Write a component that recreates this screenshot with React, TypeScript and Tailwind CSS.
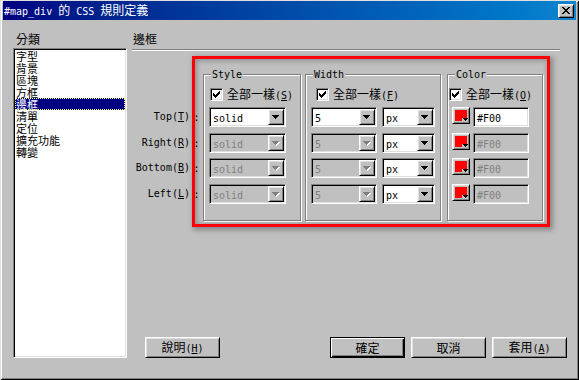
import type { ReactNode } from "react";

const sunken =
  "border border-t-[#808080] border-l-[#808080] border-b-white border-r-white shadow-[inset_1px_1px_0_#000,inset_-1px_-1px_0_#dfdfdf]";
const raised =
  "border border-t-white border-l-white border-b-black border-r-black shadow-[inset_1px_1px_0_#dfdfdf,inset_-1px_-1px_0_#808080]";

const categories = ["字型", "背景", "區塊", "方框", "邊框", "清單", "定位", "擴充功能", "轉變"];

const sides = [
  { name: "Top", key: "T" },
  { name: "Right", key: "R" },
  { name: "Bottom", key: "B" },
  { name: "Left", key: "L" },
];

// spacing between the four rows (pitch is ~25.5px in the original)
const rowGap = ["", "mt-[6px]", "mt-[5px]", "mt-[6px]"];

function M({ children }: { children: ReactNode }) {
  return <span className="font-['DejaVu_Sans_Mono',monospace] text-[10px]">{children}</span>;
}

function Arrow({ disabled }: { disabled?: boolean }) {
  const d = "M0 0h7v1H0zM1 1h5v1H1zM2 2h3v1H2zM3 3h1v1H3z";
  return (
    <svg width="8" height="5" viewBox="0 0 8 5" shapeRendering="crispEdges">
      {disabled && <path d={d} fill="#fff" transform="translate(1 1)" />}
      <path d={d} fill={disabled ? "#808080" : "#000"} />
    </svg>
  );
}

function CheckBox() {
  return (
    <span className={`flex h-[13px] w-[13px] shrink-0 items-center justify-center bg-white ${sunken}`}>
      <svg width="7" height="7" viewBox="0 0 7 7" shapeRendering="crispEdges">
        <path d="M6 0h1v3H6zM5 1h1v3H5zM4 2h1v3H4zM3 3h1v3H3zM2 4h1v3H2zM1 3h1v3H1zM0 2h1v3H0z" fill="#000" />
      </svg>
    </span>
  );
}

function Combo({ value, disabled, className }: { value: string; disabled?: boolean; className: string }) {
  return (
    <div className={`flex h-[20px] p-[1px] ${sunken} ${disabled ? "bg-[#c0c0c0]" : "bg-white"} ${className}`}>
      <span className={`flex-1 pl-[2px] leading-[16px] ${disabled ? "text-[#808080]" : "text-black"}`}>
        <M>{value}</M>
      </span>
      <span className={`flex h-[16px] w-[16px] items-center justify-center bg-[#c0c0c0] ${raised}`}>
        <Arrow disabled={disabled} />
      </span>
    </div>
  );
}

function Swatch() {
  return (
    <span className={`relative block h-[17px] w-[18px] shrink-0 bg-[#c0c0c0] p-[2px] ${raised}`}>
      <span className="block h-full w-full bg-[#ff0000]" />
      <span className="absolute bottom-[1px] right-[1px] flex h-[4px] w-[6px] items-start justify-center bg-[#c0c0c0]">
        <svg width="5" height="3" viewBox="0 0 5 3" shapeRendering="crispEdges">
          <path d="M0 0h5v1H0zM1 1h3v1H1zM2 2h1v1H2z" fill="#000" />
        </svg>
      </span>
    </span>
  );
}

function Group({ title, className, children }: { title: string; className: string; children: ReactNode }) {
  return (
    <div className={`relative h-[147px] border border-[#808080] shadow-[1px_1px_0_#fff,inset_1px_1px_0_#fff] ${className}`}>
      <span className="absolute left-[7px] top-[-8px] bg-[#c0c0c0] px-[1px] leading-[12px]">
        <M>{title}</M>
      </span>
      {children}
    </div>
  );
}

function SameRow({ k, className }: { k: string; className: string }) {
  return (
    <div className={`flex h-[13px] items-center gap-[4px] ${className}`}>
      <CheckBox />
      <span className="whitespace-nowrap leading-[13px]">
        全部一樣
        <M>
          (<u>{k}</u>)
        </M>
      </span>
    </div>
  );
}

function Btn({ children, def }: { children: ReactNode; def?: boolean }) {
  return (
    <button
      className={`h-[21px] w-[75px] bg-[#c0c0c0] leading-[17px] ${
        def
          ? "border border-black shadow-[inset_1px_1px_0_#fff,inset_-1px_-1px_0_#000,inset_-2px_-2px_0_#808080]"
          : raised
      }`}
    >
      {children}
    </button>
  );
}

export default function App() {
  return (
    <div className="relative flex h-[380px] w-[579px] flex-col bg-[#c0c0c0] px-[3px] pb-[3px] pt-[1px] font-['Noto_Sans_CJK_TC',sans-serif] text-[12px] text-black shadow-[inset_1px_1px_0_#dfdfdf,inset_-1px_-1px_0_#000,inset_2px_2px_0_#fff,inset_-2px_-2px_0_#808080]">
      {/* title bar */}
      <div className="flex h-[19px] items-center bg-gradient-to-r from-[#000080] to-[#1084d0] pl-[1px] pr-[2px] text-white">
        <span className="flex-1 whitespace-nowrap leading-[14px]">
          <M>#map_div </M>的<M> CSS </M>規則定義
        </span>
        <span className={`flex h-[14px] w-[16px] items-center justify-center bg-[#c0c0c0] ${raised}`}>
          <svg width="8" height="7" viewBox="0 0 8 7" shapeRendering="crispEdges">
            <path
              d="M0 0h2v1H0zM6 0h2v1H6zM1 1h2v1H1zM5 1h2v1H5zM2 2h4v1H2zM3 3h2v1H3zM2 4h4v1H2zM1 5h2v1H1zM5 5h2v1H5zM0 6h2v1H0zM6 6h2v1H6z"
              fill="#000"
            />
          </svg>
        </span>
      </div>

      <div className="flex flex-1 pb-[19px] pl-[10px] pt-[11px]">
        {/* category list */}
        <div className="flex w-[114px] flex-col">
          <div className="h-[17px] pl-[3px] pt-[1px] leading-[14px]">分類</div>
          <div className={`flex-1 overflow-hidden bg-white p-[1px] ${sunken}`}>
            {categories.map((c, i) => (
              <div
                key={c}
                className={`h-[12px] pl-[1px] text-[11px] leading-[12px] ${
                  i === 4
                    ? "bg-[#000080] text-white outline-1 -outline-offset-1 outline-dotted outline-[#ffff80]"
                    : ""
                }`}
              >
                {c}
              </div>
            ))}
          </div>
        </div>

        {/* border panel */}
        <div className="ml-[5px] flex w-[435px] flex-col">
          <div className="h-[18px] pl-[1px] pt-[1px] leading-[14px]">邊框</div>
          <div className="h-[2px] w-[428px] border-b border-t border-b-white border-t-[#808080]" />

          <div className="mt-[23px] flex">
            <div className="flex w-[71px] flex-col pt-[33px]">
              {sides.map((s, i) => (
                <div key={s.key} className={`flex h-[20px] items-center justify-end leading-[20px] ${rowGap[i]}`}>
                  <M>
                    {s.name}(<u>{s.key}</u>)
                  </M>
                  <span className="w-[13px] text-center">
                    <M>:</M>
                  </span>
                </div>
              ))}
            </div>

            <Group title="Style" className="w-[98px]">
              <div className="flex flex-col pl-[5px] pt-[13px]">
                <SameRow k="S" className="ml-[1px]" />
                {sides.map((s, i) => (
                  <Combo key={s.key} value="solid" disabled={i > 0} className={`w-[77px] ${i === 0 ? "mt-[6px]" : rowGap[i]}`} />
                ))}
              </div>
            </Group>

            <Group title="Width" className="ml-[4px] w-[136px]">
              <div className="flex flex-col pl-[5px] pt-[13px]">
                <SameRow k="F" className="ml-[5px]" />
                {sides.map((s, i) => (
                  <div key={s.key} className={`flex gap-[5px] ${i === 0 ? "mt-[6px]" : rowGap[i]}`}>
                    <Combo value="5" disabled={i > 0} className="w-[66px]" />
                    <Combo value="px" className="w-[53px]" />
                  </div>
                ))}
              </div>
            </Group>

            <Group title="Color" className="ml-[6px] w-[96px]">
              <div className="flex flex-col pl-[1px] pt-[13px]">
                <SameRow k="O" className="" />
                {sides.map((s, i) => (
                  <div key={s.key} className={`flex gap-[3px] pl-[3px] ${i === 0 ? "mt-[6px]" : rowGap[i]}`}>
                    <Swatch />
                    <div
                      className={`h-[20px] w-[56px] p-[1px] ${sunken} ${
                        i > 0 ? "bg-[#c0c0c0] text-[#808080]" : "bg-white"
                      }`}
                    >
                      <span className="block pl-[2px] leading-[16px]">
                        <M>#F00</M>
                      </span>
                    </div>
                  </div>
                ))}
              </div>
            </Group>
          </div>

          <div className="flex-1" />

          <div className="flex gap-[6px] pl-[13px]">
            <Btn>
              說明
              <M>
                (<u>H</u>)
              </M>
            </Btn>
            <div className="flex-1" />
            <Btn def>確定</Btn>
            <Btn>取消</Btn>
            <Btn>
              套用
              <M>
                (<u>A</u>)
              </M>
            </Btn>
          </div>
        </div>
      </div>

      {/* red annotation frame */}
      <div className="pointer-events-none absolute left-[192px] top-[56px] h-[171px] w-[358px] border-[3px] border-[#ff0000] shadow-[2px_2px_5px_1px_rgba(0,0,0,0.3),inset_1px_1px_5px_1px_rgba(0,0,0,0.25)]" />
    </div>
  );
}
